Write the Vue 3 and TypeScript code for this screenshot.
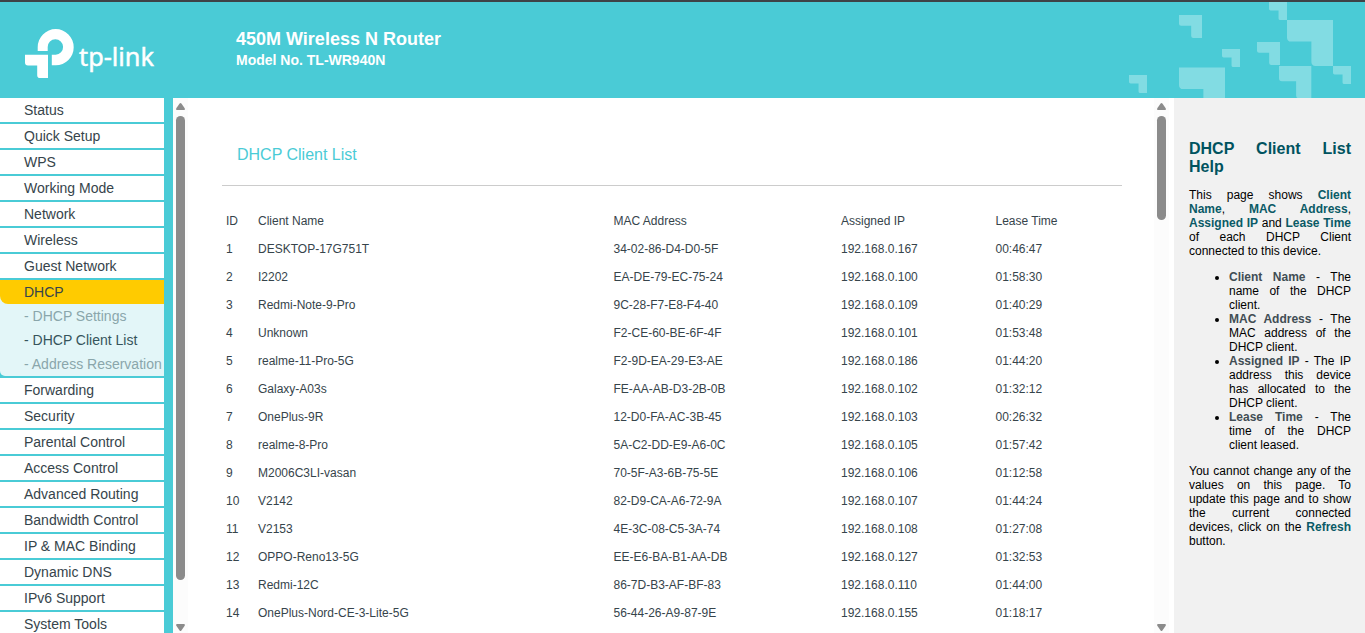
<script setup lang="ts">
interface MenuItem {
  label: string
  active?: boolean
  children?: { label: string; current?: boolean }[]
}

const menu: MenuItem[] = [
  { label: 'Status' },
  { label: 'Quick Setup' },
  { label: 'WPS' },
  { label: 'Working Mode' },
  { label: 'Network' },
  { label: 'Wireless' },
  { label: 'Guest Network' },
  {
    label: 'DHCP',
    active: true,
    children: [
      { label: 'DHCP Settings' },
      { label: 'DHCP Client List', current: true },
      { label: 'Address Reservation' },
    ],
  },
  { label: 'Forwarding' },
  { label: 'Security' },
  { label: 'Parental Control' },
  { label: 'Access Control' },
  { label: 'Advanced Routing' },
  { label: 'Bandwidth Control' },
  { label: 'IP & MAC Binding' },
  { label: 'Dynamic DNS' },
  { label: 'IPv6 Support' },
  { label: 'System Tools' },
]

const clients: [string, string, string, string][] = [
  ['DESKTOP-17G751T', '34-02-86-D4-D0-5F', '192.168.0.167', '00:46:47'],
  ['I2202', 'EA-DE-79-EC-75-24', '192.168.0.100', '01:58:30'],
  ['Redmi-Note-9-Pro', '9C-28-F7-E8-F4-40', '192.168.0.109', '01:40:29'],
  ['Unknown', 'F2-CE-60-BE-6F-4F', '192.168.0.101', '01:53:48'],
  ['realme-11-Pro-5G', 'F2-9D-EA-29-E3-AE', '192.168.0.186', '01:44:20'],
  ['Galaxy-A03s', 'FE-AA-AB-D3-2B-0B', '192.168.0.102', '01:32:12'],
  ['OnePlus-9R', '12-D0-FA-AC-3B-45', '192.168.0.103', '00:26:32'],
  ['realme-8-Pro', '5A-C2-DD-E9-A6-0C', '192.168.0.105', '01:57:42'],
  ['M2006C3LI-vasan', '70-5F-A3-6B-75-5E', '192.168.0.106', '01:12:58'],
  ['V2142', '82-D9-CA-A6-72-9A', '192.168.0.107', '01:44:24'],
  ['V2153', '4E-3C-08-C5-3A-74', '192.168.0.108', '01:27:08'],
  ['OPPO-Reno13-5G', 'EE-E6-BA-B1-AA-DB', '192.168.0.127', '01:32:53'],
  ['Redmi-12C', '86-7D-B3-AF-BF-83', '192.168.0.110', '01:44:00'],
  ['OnePlus-Nord-CE-3-Lite-5G', '56-44-26-A9-87-9E', '192.168.0.155', '01:18:17'],
]

const helpTerms: { term: string; text: string }[] = [
  { term: 'Client Name', text: 'The name of the DHCP client.' },
  { term: 'MAC Address', text: 'The MAC address of the DHCP client.' },
  { term: 'Assigned IP', text: 'The IP address this device has allocated to the DHCP client.' },
  { term: 'Lease Time', text: 'The time of the DHCP client leased.' },
]

// Header decoration: corner shapes as [x, y, size]
const corners: [number, number, number][] = [
  [59, 13, 23],
  [149, 0, 18],
  [167, 18, 46],
  [137, 40, 23],
  [102, 47, 18],
  [159, 64, 32.3],
  [213, 64, 18],
  [9, 73, 18],
  [59, 65.5, 46],
]

function cornerPath([x, y, s]: [number, number, number]): string {
  const arm = s * 0.47
  const stem = s * 0.53
  const r = s * 0.09
  return (
    `M${x} ${y}h${s}v${s}h${-(s - stem - r)}q${-r} 0 ${-r} ${-r}` +
    `V${y + arm}h${-(stem - r)}q${-r} 0 ${-r} ${-r}Z`
  )
}
</script>

<template>
  <div class="page">
    <header class="header">
      <svg class="logo" width="140" height="56" viewBox="20 26 140 56">
        <g fill="#fff">
          <path d="M37.7 51V47.2A18 18.1 0 1 1 55.7 65.3H51.8V54.7H55.7A7.7 7.7 0 1 0 47.7 47V51Z" />
          <path d="M25 54.7H48V78H40Q37.2 78 37.2 75.2V65.5H28Q25 65.5 25 62.5Z" />
          <text x="79" y="65.5" textLength="75" lengthAdjust="spacingAndGlyphs">tp-link</text>
        </g>
      </svg>
      <div class="product">
        <div class="name">450M Wireless N Router</div>
        <div class="model">Model No. TL-WR940N</div>
      </div>
      <svg class="decor" width="245" height="96" viewBox="0 0 245 96">
        <path v-for="(c, i) in corners" :key="i" :d="cornerPath(c)" fill="#82dce3" />
      </svg>
    </header>

    <div class="body">
      <nav class="sidebar">
        <div v-for="item in menu" :key="item.label" class="group">
          <div class="item" :class="{ active: item.active }"><span>{{ item.label }}</span></div>
          <div v-if="item.children" class="children">
            <div
              v-for="child in item.children"
              :key="child.label"
              class="sub"
              :class="{ current: child.current }"
            >- {{ child.label }}</div>
          </div>
        </div>
      </nav>

      <div class="scrollbar">
        <svg width="9" height="7" viewBox="0 0 9 7"><path d="M3.6.6Q4.5-.4 5.4.6L8.7 5.3Q9.2 7 8 7H1Q-.2 7 .3 5.3Z" /></svg>
        <div class="track"><div class="thumb menu-thumb"></div></div>
        <svg width="9" height="7" viewBox="0 0 9 7"><path d="M3.6 6.4Q4.5 7.4 5.4 6.4L8.7 1.7Q9.2 0 8 0H1Q-.2 0 .3 1.7Z" /></svg>
      </div>

      <main class="main">
        <h1 class="title">DHCP Client List</h1>
        <div class="table">
          <div class="row">
            <span>ID</span><span>Client Name</span><span>MAC Address</span><span>Assigned IP</span><span>Lease Time</span>
          </div>
          <div v-for="(client, i) in clients" :key="client[1]" class="row">
            <span>{{ i + 1 }}</span>
            <span v-for="cell in client" :key="cell">{{ cell }}</span>
          </div>
        </div>
      </main>

      <div class="scrollbar">
        <svg width="9" height="7" viewBox="0 0 9 7"><path d="M3.6.6Q4.5-.4 5.4.6L8.7 5.3Q9.2 7 8 7H1Q-.2 7 .3 5.3Z" /></svg>
        <div class="track"><div class="thumb main-thumb"></div></div>
        <svg width="9" height="7" viewBox="0 0 9 7"><path d="M3.6 6.4Q4.5 7.4 5.4 6.4L8.7 1.7Q9.2 0 8 0H1Q-.2 0 .3 1.7Z" /></svg>
      </div>

      <aside class="help">
        <h2>DHCP Client List Help</h2>
        <p>
          This page shows <b>Client Name</b>, <b>MAC Address</b>, <b>Assigned IP</b> and
          <b>Lease Time</b> of each DHCP Client connected to this device.
        </p>
        <ul>
          <li v-for="h in helpTerms" :key="h.term"><b>{{ h.term }}</b> - {{ h.text }}</li>
        </ul>
        <p>
          You cannot change any of the values on this page. To update this page and to show the
          current connected devices, click on the <b>Refresh</b> button.
        </p>
      </aside>
    </div>
  </div>
</template>

<style>
body {
  margin: 0;
  overflow: hidden;
}
</style>

<style scoped>
.page {
  display: flex;
  flex-direction: column;
  width: 1365px;
  height: 633px;
  overflow: hidden;
  box-sizing: border-box;
  border-top: 2px solid #3e4347;
  background: #fff;
  font-family: "Liberation Sans", Arial, sans-serif;
  color: #36444b;
}

.header {
  flex: none;
  display: flex;
  height: 96px;
  background: #4acbd6;
  color: #fff;
}

.logo {
  margin: 24px 0 0 20px;
}

.logo text {
  font-family: "Noto Sans", sans-serif;
  font-size: 24.5px;
  stroke: #fff;
  stroke-width: 0.45px;
}

.product {
  margin: 26px 0 0 76px;
  font-weight: bold;
  white-space: nowrap;
}

.name {
  font-size: 18px;
  line-height: 22px;
}

.model {
  font-size: 14px;
  line-height: 20px;
}

.decor {
  margin-left: auto;
}

.body {
  flex: 1;
  min-height: 0;
  display: flex;
}

.sidebar {
  flex: none;
  width: 164px;
  overflow: hidden;
  border-right: 9px solid #4acbd6;
  background: #4acbd6;
  font-size: 14px;
  line-height: 24px;
  white-space: nowrap;
}

.group {
  margin-bottom: 2px;
}

.item {
  background: #fff;
}

.item span,
.sub {
  display: block;
  height: 24px;
  padding-left: 24px;
}

.item.active {
  background: #e3f6f8;
}

.item.active span {
  background: #ffcb00;
  border-bottom-left-radius: 8px;
}

.children {
  background: #e3f6f8;
  border-bottom-left-radius: 5px;
}

.sub {
  color: #8aa6ab;
}

.sub.current {
  color: #36545b;
}

.scrollbar {
  flex: none;
  display: flex;
  flex-direction: column;
  align-items: center;
  gap: 6px;
  width: 15px;
  box-sizing: border-box;
  padding: 5px 0 2px;
  background: #fcfcfc;
}

.scrollbar svg {
  flex: none;
  fill: #8b8b8b;
}

.track {
  flex: 1;
  width: 9px;
}

.thumb {
  border-radius: 4.5px;
  background: #8b8b8b;
}

.menu-thumb {
  height: 464px;
}

.main-thumb {
  height: 104px;
}

.main {
  flex: 1;
  min-width: 0;
  overflow: hidden;
  padding: 0 32px 0 34px;
}

.title {
  height: 88px;
  margin: 0 0 21px;
  padding: 47px 0 0 15px;
  box-sizing: border-box;
  border-bottom: 1px solid #ccc;
  font-size: 16px;
  font-weight: normal;
  line-height: 19px;
  color: #4acbd6;
}

.row {
  display: grid;
  grid-template-columns: 32px 355.5px 227.5px 154.5px 1fr;
  padding-left: 4px;
  font-size: 12px;
  line-height: 28px;
  white-space: nowrap;
}

.help {
  flex: none;
  width: 191px;
  box-sizing: border-box;
  margin-left: 5px;
  padding: 42px 14px 0 15px;
  background: #f1f1f1;
  color: #000;
  font-size: 12px;
  line-height: 14px;
  text-align: justify;
}

.help h2 {
  margin: 0 0 12px;
  font-size: 16px;
  line-height: 18px;
  color: #00535f;
}

.help p {
  margin: 0;
}

.help b {
  color: #0a5a66;
}

.help ul {
  margin: 12px 0;
  padding-left: 40px;
}

.help li b {
  color: #414d54;
}
</style>
